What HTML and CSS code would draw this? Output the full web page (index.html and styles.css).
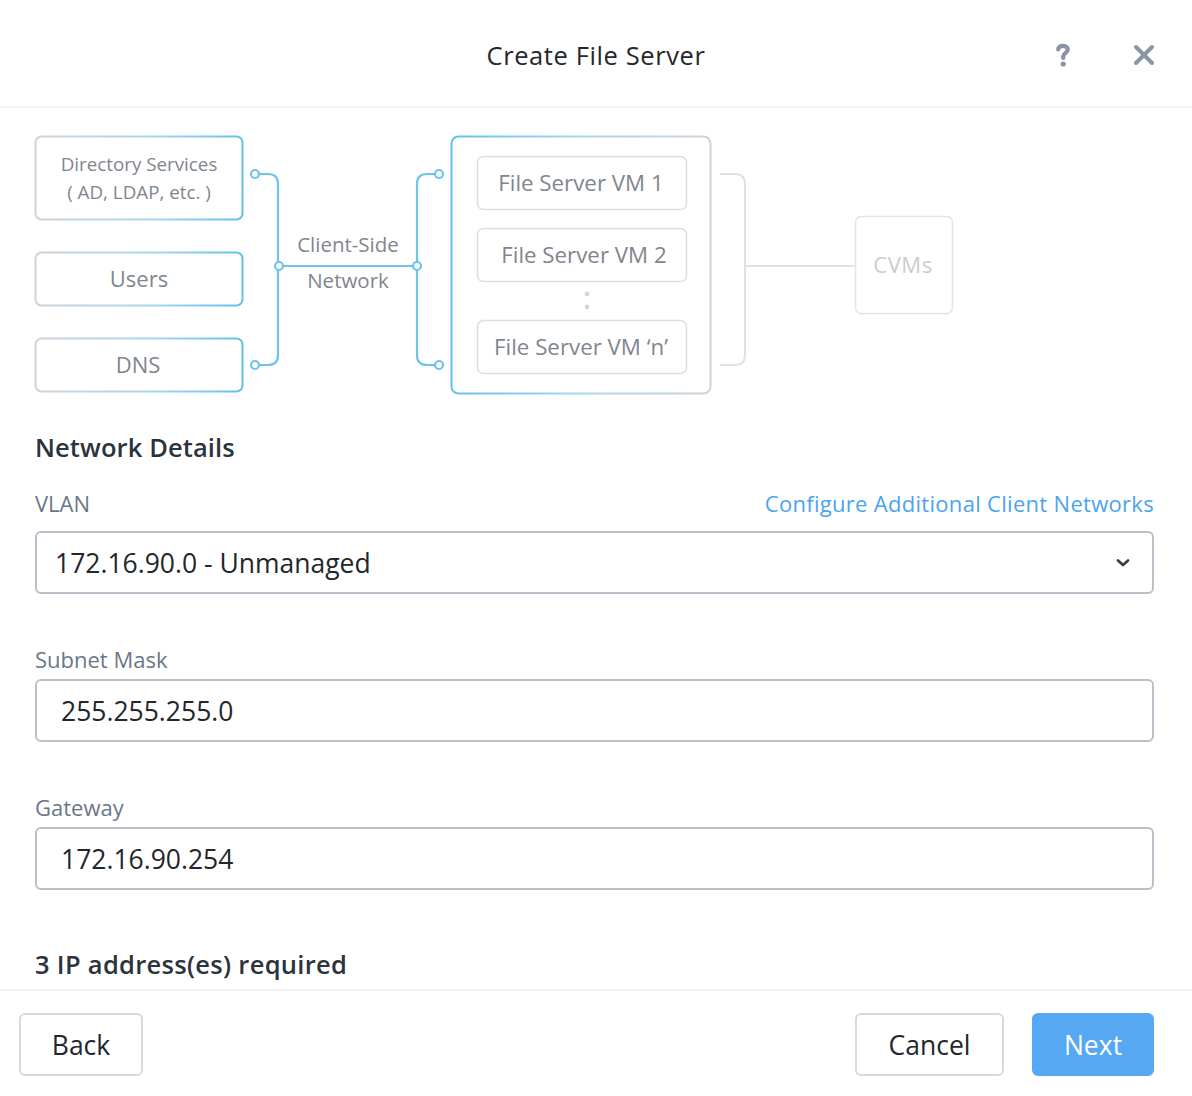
FILE: index.html
```html
<!DOCTYPE html>
<html>
<head>
<meta charset="utf-8">
<link rel="stylesheet" href="styles.css">
</head>
<body>
<div class="modal">
  <header class="modal-header">
    <h1 class="title">Create File Server</h1>
    <div class="header-actions">
      <button class="icon-btn" aria-label="Help">
        <svg width="16" height="26" viewBox="0 0 16 26"><path d="M3.2 7.5 C3.2 2.6 12.8 2.6 12.8 7.5 C12.8 11 8.2 11 8.2 15 V16" fill="none" stroke="#8a95a4" stroke-width="4.2" stroke-linecap="round"/><circle cx="8.2" cy="22" r="2.6" fill="#8a95a4"/></svg>
      </button>
      <button class="icon-btn" aria-label="Close">
        <svg width="22" height="22" viewBox="0 0 22 22"><path d="M3 3 L19 19 M19 3 L3 19" stroke="#8a95a4" stroke-width="4" stroke-linecap="round"/></svg>
      </button>
    </div>
  </header>

  <main class="modal-body">
    <svg class="diagram" width="980" height="296" viewBox="0 108 980 296">
      <defs>
        <linearGradient id="gb" x1="0" y1="0" x2="1" y2="0">
          <stop offset="0" stop-color="#cfd3d8"/>
          <stop offset="0.55" stop-color="#a9d7ef"/>
          <stop offset="1" stop-color="#62c0ee"/>
        </linearGradient>
        <linearGradient id="gbr" x1="0" y1="0" x2="1" y2="0">
          <stop offset="0" stop-color="#62c0ee"/>
          <stop offset="0.5" stop-color="#a9d7ef"/>
          <stop offset="1" stop-color="#cfd3d8"/>
        </linearGradient>
      </defs>
      <g font-family="'Open Sans', Lato, sans-serif" fill="#80868e" text-anchor="middle">
        <rect x="35.5" y="136.5" width="207" height="83" rx="6" fill="#fff" stroke="url(#gb)" stroke-width="2"/>
        <text x="139" y="171" font-size="18.8">Directory Services</text>
        <text x="139" y="199" font-size="18.8">( AD, LDAP, etc. )</text>
        <rect x="35.5" y="252.5" width="207" height="53" rx="6" fill="#fff" stroke="url(#gb)" stroke-width="2"/>
        <text x="139" y="287" font-size="22">Users</text>
        <rect x="35.5" y="338.5" width="207" height="53" rx="6" fill="#fff" stroke="url(#gb)" stroke-width="2"/>
        <text x="138" y="373" font-size="22">DNS</text>

        <g fill="none" stroke="#6cc3ee" stroke-width="2.2">
          <path d="M259 174 H268 Q278 174 278 184 V355 Q278 365 268 365 H259"/>
          <path d="M279 266 H417"/>
          <path d="M435 174 H427 Q417 174 417 184 V355 Q417 365 427 365 H435"/>
          <circle cx="255" cy="174" r="4" fill="#fff"/>
          <circle cx="255" cy="365" r="4" fill="#fff"/>
          <circle cx="279" cy="266" r="4" fill="#fff"/>
          <circle cx="417" cy="266" r="4" fill="#fff"/>
          <circle cx="439" cy="174" r="4" fill="#fff"/>
          <circle cx="439" cy="365" r="4" fill="#fff"/>
        </g>
        <text x="348" y="252" font-size="20.5">Client-Side</text>
        <text x="348" y="288" font-size="20.5">Network</text>

        <rect x="451.5" y="136.5" width="259" height="257" rx="7" fill="#fff" stroke="url(#gbr)" stroke-width="2"/>
        <rect x="477.5" y="156.5" width="209" height="53" rx="6" fill="#fff" stroke="#dcdfe2" stroke-width="1.6"/>
        <text x="581" y="191" font-size="22.3">File Server VM 1</text>
        <rect x="477.5" y="228.5" width="209" height="53" rx="6" fill="#fff" stroke="#dcdfe2" stroke-width="1.6"/>
        <text x="584" y="263" font-size="22.3">File Server VM 2</text>
        <circle cx="587" cy="294" r="2.4" fill="#d3d6d9"/>
        <circle cx="587" cy="307" r="2.4" fill="#d3d6d9"/>
        <rect x="477.5" y="320.5" width="209" height="53" rx="6" fill="#fff" stroke="#dcdfe2" stroke-width="1.6"/>
        <text x="581" y="355" font-size="22.3">File Server VM ‘n’</text>

        <g fill="none" stroke="#dfe2e5" stroke-width="2">
          <path d="M720 174 H735 Q745 174 745 184 V355 Q745 365 735 365 H720"/>
          <path d="M745 266 H855"/>
        </g>
        <rect x="855.5" y="216.5" width="97" height="97" rx="6" fill="#fff" stroke="#e3e5e8" stroke-width="1.6"/>
        <text x="903" y="273" font-size="22" letter-spacing="0.6" fill="#c9cdd1">CVMs</text>
      </g>
    </svg>

    <section class="form">
      <h2 class="section-title">Network Details</h2>

      <div class="field field-vlan">
        <div class="label-row">
          <label class="label">VLAN</label>
          <a class="link" href="#">Configure Additional Client Networks</a>
        </div>
        <div class="select">
          <span class="select-value">172.16.90.0 - Unmanaged</span>
          <svg class="chevron" width="14" height="10" viewBox="0 0 14 10"><path d="M2 2.5 L7 7 L12 2.5" fill="none" stroke="#36404b" stroke-width="2.8" stroke-linecap="round" stroke-linejoin="round"/></svg>
        </div>
      </div>

      <div class="field">
        <label class="label">Subnet Mask</label>
        <div class="input">255.255.255.0</div>
      </div>

      <div class="field">
        <label class="label">Gateway</label>
        <div class="input">172.16.90.254</div>
      </div>

      <h2 class="section-title ip-title">3 IP address(es) required</h2>
    </section>
  </main>

  <footer class="modal-footer">
    <button class="btn">Back</button>
    <div class="footer-right">
      <button class="btn btn-cancel">Cancel</button>
      <button class="btn btn-primary">Next</button>
    </div>
  </footer>
</div>
</body>
</html>
```

FILE: styles.css
```css
* { box-sizing: border-box; }
html, body { margin: 0; padding: 0; background: #fff; }
body {
  font-family: "Open Sans", Lato, "Liberation Sans", sans-serif;
  color: #222;
}
.modal {
  width: 1192px;
  height: 1096px;
  display: flex;
  flex-direction: column;
  overflow: hidden;
}
.modal-header {
  height: 108px;
  flex: none;
  border-bottom: 2px solid #f1f2f3;
  display: flex;
  align-items: center;
  justify-content: center;
  position: relative;
}
.title {
  margin: 0;
  font-size: 25.5px;
  font-weight: 400;
  color: #24282c;
  letter-spacing: 0.6px;
  padding-top: 3px;
}
.header-actions {
  position: absolute;
  right: 37px;
  top: 42px;
  display: flex;
  align-items: center;
  gap: 62px;
}
.icon-btn {
  background: none;
  border: 0;
  padding: 0;
  display: flex;
  align-items: center;
}
.modal-body {
  flex: 1;
  overflow: hidden;
}
.diagram { display: block; }
.form {
  padding: 0 38px 0 35px;
}
.section-title {
  margin: 28px 0 0;
  font-size: 25.5px;
  line-height: 30px;
  font-weight: 600;
  color: #2b333c;
  letter-spacing: 0.1px;
}
.field { margin-top: 51px; }
.field-vlan { margin-top: 27px; }
.label-row {
  display: flex;
  justify-content: space-between;
  align-items: center;
  margin-bottom: 14px;
}
.label {
  display: block;
  font-size: 22px;
  line-height: 28px;
  color: #6b7789;
  margin-bottom: 6px;
}
.label-row .label { margin-bottom: 0; }
.link {
  font-size: 22px;
  line-height: 28px;
  color: #4ba4f0;
  text-decoration: none;
  letter-spacing: 0.3px;
}
.select, .input {
  height: 63px;
  border: 2px solid #bac0c9;
  border-radius: 6px;
  display: flex;
  align-items: center;
  font-size: 26.5px;
  color: #23272b;
}
.select {
  padding: 0 22px 0 18px;
  justify-content: space-between;
}
.input { padding: 0 24px; }
.chevron { display: block; }
.ip-title { margin-top: 59px; letter-spacing: 0.3px; }
.modal-footer {
  height: 107px;
  flex: none;
  border-top: 2px solid #f1f2f3;
  display: flex;
  justify-content: space-between;
  align-items: flex-start;
  padding: 22px 38px 0 19px;
}
.footer-right { display: flex; gap: 28px; }
.btn {
  height: 63px;
  width: 124px;
  padding: 0;
  border: 2px solid #d7dbe0;
  border-radius: 6px;
  background: #fff;
  font-family: "Open Sans", Lato, "Liberation Sans", sans-serif;
  font-size: 26.5px;
  color: #23272b;
}
.btn-cancel { width: 149px; }
.btn-primary {
  width: 122px;
  background: #55a8f1;
  border-color: #55a8f1;
  color: #fff;
}
```
